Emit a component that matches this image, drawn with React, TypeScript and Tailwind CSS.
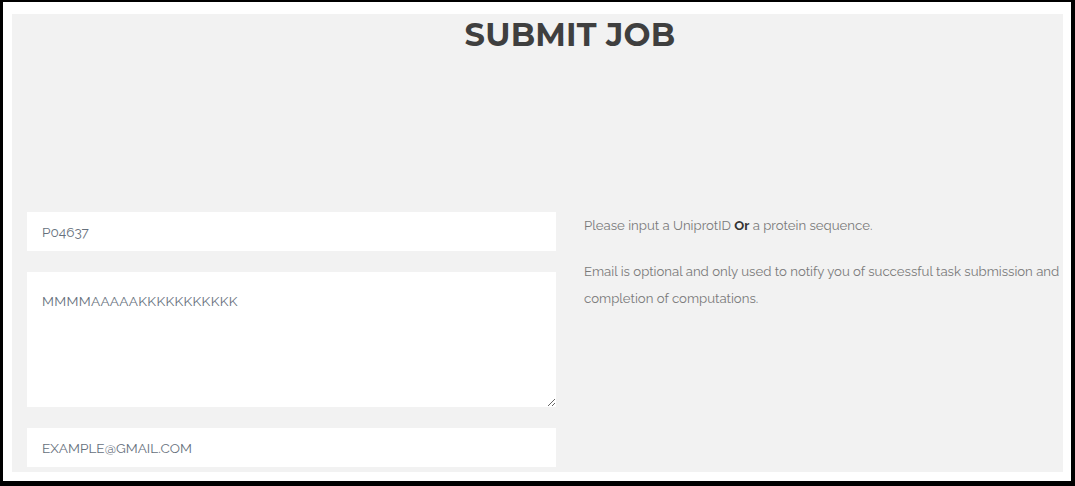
export default function App() {
  return (
    <div className="h-[486px] w-[1075px] border-t-2 border-l-[3px] border-r-4 border-b-[5px] border-black bg-white pt-[12px] pl-[9px] pr-[8px] pb-[9px]">
      <div className="flex h-[458px] flex-col bg-[#f2f2f2] pl-[15px]">
        <h1 className="mt-[1px] pl-[50px] text-center font-['Montserrat','Open_Sans',sans-serif] text-[32px] font-bold leading-[40px] tracking-[0.2px] text-[#3f3f3f]">
          SUBMIT JOB
        </h1>
        <div className="mt-[157px] flex gap-[28px]">
          <div className="flex w-[529px] shrink-0 flex-col gap-[21px]">
            <input
              type="text"
              defaultValue="P04637"
              className="h-[39px] bg-white px-[15px] font-['Raleway','Lato',sans-serif] text-[13.6px] text-[#66707c] outline-none"
            />
            <textarea
              defaultValue="MMMMAAAAAKKKKKKKKKKK"
              className="h-[135px] resize-y bg-white px-[15px] pt-[19px] font-['Raleway','Lato',sans-serif] text-[13.6px] tracking-[0.3px] text-[#66707c] outline-none"
            />
            <input
              type="text"
              placeholder="EXAMPLE@GMAIL.COM"
              className="h-[39px] bg-white px-[15px] font-['Raleway','Lato',sans-serif] text-[13.6px] text-[#66707c] outline-none placeholder:text-[#66707c]"
            />
          </div>
          <div className="flex-1 font-['Raleway','Lato',sans-serif] text-[13.2px] leading-[27px] text-[#7a7a7a]">
            <p>
              Please input a UniprotID <b className="font-bold text-[#333]">Or</b> a protein sequence.
            </p>
            <p className="mt-[19px]">
              Email is optional and only used to notify you of successful task submission and completion of computations.
            </p>
          </div>
        </div>
      </div>
    </div>
  );
}
